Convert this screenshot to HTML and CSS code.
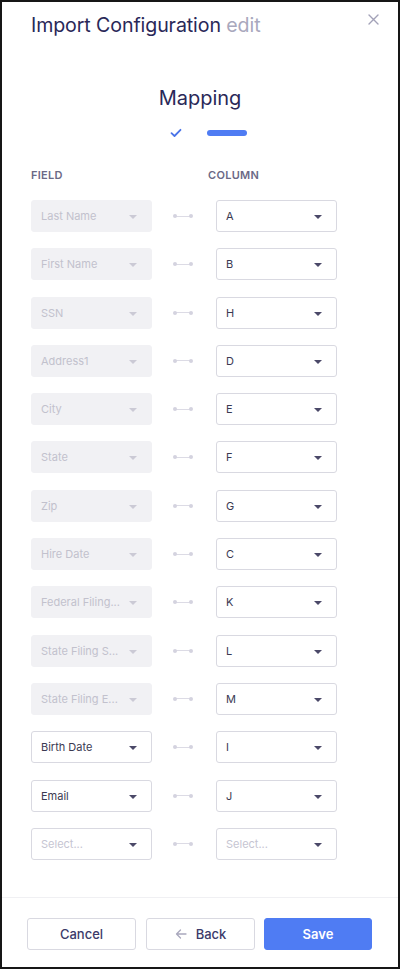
FILE: index.html
```html
<!DOCTYPE html>
<html>
<head>
<meta charset="utf-8">
<link rel="stylesheet" href="styles.css">
</head>
<body>
<div class="frame">
  <div class="header">
    <h1 class="title">Import Configuration <span class="edit">edit</span></h1>
    <button class="close" aria-label="Close">
      <svg width="11" height="11" viewBox="0 0 11 11"><path d="M1 1L10 10M10 1L1 10" stroke="#a3a2b8" stroke-width="1.4" fill="none" stroke-linecap="round"/></svg>
    </button>
  </div>
  <div class="body">
    <h2 class="step-title">Mapping</h2>
    <div class="steps">
      <svg class="check" width="12" height="10" viewBox="0 0 12 10"><path d="M1.5 5.2L4.5 8L10.5 1.8" stroke="#4a74e8" stroke-width="1.8" fill="none" stroke-linecap="round" stroke-linejoin="round"/></svg>
      <span class="bar"></span>
    </div>
    <div class="cols">
      <div class="col-label">FIELD</div>
      <div class="col-label col2">COLUMN</div>
    </div>
    <div class="rows">
      <div class="row"><div class="sel dis"><span class="txt">Last Name</span><i class="caret"></i></div><span class="link"></span><div class="sel">A<i class="caret"></i></div></div>
      <div class="row"><div class="sel dis"><span class="txt">First Name</span><i class="caret"></i></div><span class="link"></span><div class="sel">B<i class="caret"></i></div></div>
      <div class="row"><div class="sel dis"><span class="txt">SSN</span><i class="caret"></i></div><span class="link"></span><div class="sel">H<i class="caret"></i></div></div>
      <div class="row"><div class="sel dis"><span class="txt">Address1</span><i class="caret"></i></div><span class="link"></span><div class="sel">D<i class="caret"></i></div></div>
      <div class="row"><div class="sel dis"><span class="txt">City</span><i class="caret"></i></div><span class="link"></span><div class="sel">E<i class="caret"></i></div></div>
      <div class="row"><div class="sel dis"><span class="txt">State</span><i class="caret"></i></div><span class="link"></span><div class="sel">F<i class="caret"></i></div></div>
      <div class="row"><div class="sel dis"><span class="txt">Zip</span><i class="caret"></i></div><span class="link"></span><div class="sel">G<i class="caret"></i></div></div>
      <div class="row"><div class="sel dis"><span class="txt">Hire Date</span><i class="caret"></i></div><span class="link"></span><div class="sel">C<i class="caret"></i></div></div>
      <div class="row"><div class="sel dis"><span class="txt">Federal Filing...</span><i class="caret"></i></div><span class="link"></span><div class="sel">K<i class="caret"></i></div></div>
      <div class="row"><div class="sel dis"><span class="txt">State Filing S...</span><i class="caret"></i></div><span class="link"></span><div class="sel">L<i class="caret"></i></div></div>
      <div class="row"><div class="sel dis"><span class="txt">State Filing E...</span><i class="caret"></i></div><span class="link"></span><div class="sel">M<i class="caret"></i></div></div>
      <div class="row"><div class="sel"><span class="txt">Birth Date</span><i class="caret"></i></div><span class="link"></span><div class="sel">I<i class="caret"></i></div></div>
      <div class="row"><div class="sel"><span class="txt">Email</span><i class="caret"></i></div><span class="link"></span><div class="sel">J<i class="caret"></i></div></div>
      <div class="row"><div class="sel ph"><span class="txt">Select...</span><i class="caret"></i></div><span class="link"></span><div class="sel ph">Select...<i class="caret"></i></div></div>
    </div>
  </div>
  <div class="footer">
    <button class="btn">Cancel</button>
    <button class="btn"><svg class="arrow" width="12" height="10" viewBox="0 0 12 10"><path d="M11 5H1.5M5.5 1L1.5 5L5.5 9" stroke="#a9a8bd" stroke-width="1.3" fill="none" stroke-linecap="round" stroke-linejoin="round"/></svg>Back</button>
    <button class="btn primary">Save</button>
  </div>
</div>
</body>
</html>
```
FILE: styles.css
```css
* { box-sizing: border-box; }
body {
  margin: 0;
  font-family: Inter, "Noto Sans", sans-serif;
  background: #fff;
}
.frame {
  width: 400px;
  height: 969px;
  border: 2px solid #161616;
  display: flex;
  flex-direction: column;
  background: #fff;
}
.header {
  position: relative;
  padding: 10px 0 0 29px;
}
.title {
  margin: 0;
  font-size: 19.6px;
  line-height: 26px;
  font-weight: 400;
  color: #2a2858;
  letter-spacing: -0.1px;
}
.edit { color: #a9a8bd; }
.close {
  position: absolute;
  right: 19px;
  top: 12px;
  border: 0;
  background: none;
  padding: 0;
  width: 11px;
  height: 11px;
  display: flex;
}
.body {
  flex: 1;
  padding: 0 0 0 29px;
}
.step-title {
  margin: 47px 0 0 -29px;
  text-align: center;
  font-size: 20px;
  line-height: 26px;
  font-weight: 400;
  color: #2a2858;
}
.steps {
  margin: 17px 0 0 -29px;
  display: flex;
  justify-content: center;
  align-items: center;
  gap: 25px;
  height: 10px;
  padding-left: 17px;
}
.bar {
  width: 40px;
  height: 6px;
  border-radius: 3px;
  background: #4f7cf3;
}
.cols {
  display: flex;
  margin-top: 30px;
  height: 14px;
  align-items: center;
}
.col-label {
  font-size: 11px;
  font-weight: 600;
  color: #6b6986;
  letter-spacing: 0.3px;
  width: 177px;
}
.rows {
  margin-top: 18px;
  display: flex;
  flex-direction: column;
  gap: 16.3px;
}
.row {
  display: flex;
  align-items: center;
  height: 32px;
}
.sel {
  width: 121px;
  height: 32px;
  border: 1px solid #d9d9e1;
  border-radius: 3px;
  display: flex;
  align-items: center;
  padding: 0 0 0 9px;
  font-size: 11px;
  color: #3b3a52;
  position: relative;
  background: #fff;
}
.sel .txt {
  white-space: nowrap;
}
.sel .caret {
  position: absolute;
  right: 14px;
  top: 14px;
  width: 0;
  height: 0;
  border-left: 4.5px solid transparent;
  border-right: 4.5px solid transparent;
  border-top: 4.5px solid #4b4968;
}
.sel.dis {
  background: #f1f1f4;
  border-color: #f1f1f4;
  color: #c2c1cd;
}
.sel.dis .caret { border-top-color: #cbcad5; }
.sel.ph { color: #c6c5d2; }
.link {
  width: 64px;
  height: 32px;
  position: relative;
}
.link::before {
  content: "";
  position: absolute;
  left: 23px;
  top: 15.5px;
  width: 17px;
  height: 1px;
  background: #dcdbe5;
}
.link::after {
  content: "";
  position: absolute;
  left: 21px;
  top: 14px;
  width: 4px;
  height: 4px;
  border-radius: 50%;
  background: #d4d3df;
  box-shadow: 16px 0 0 #d4d3df;
}
.footer {
  border-top: 1px solid #f0f0f3;
  height: 70px;
  display: flex;
  gap: 10px;
  padding: 20px 0 0 25px;
}
.btn {
  width: 109px;
  height: 32px;
  border: 1px solid #d9d9e1;
  border-radius: 3px;
  background: #fff;
  font-family: Inter, "Noto Sans", sans-serif;
  font-size: 13px;
  font-weight: 500;
  color: #3b3a6a;
  display: flex;
  align-items: center;
  justify-content: center;
  gap: 9px;
  padding: 0;
}
.btn.primary {
  width: 108px;
  margin-left: -1px;
  background: #4f7cf3;
  border-color: #4f7cf3;
  color: #fff;
  font-weight: 600;
}
```
